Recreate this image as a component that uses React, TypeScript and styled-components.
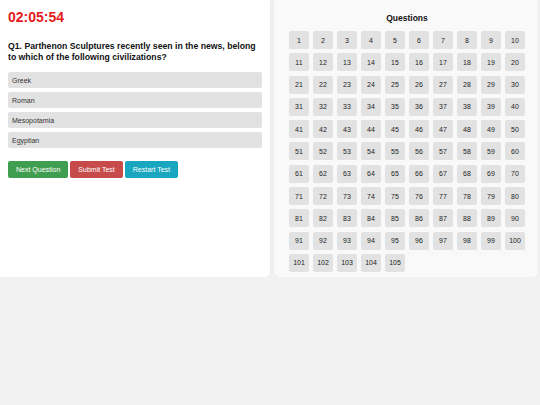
import React from "react";
import styled, { createGlobalStyle } from "styled-components";

const options = ["Greek", "Roman", "Mesopotamia", "Egyptian"];
const questionNumbers = Array.from({ length: 105 }, (_, i) => i + 1);

function App() {
  return (
    <>
      <GlobalStyle />
      <Page>
        <QuizPanel>
          <Timer>02:05:54</Timer>
          <QuestionText>
            Q1. Parthenon Sculptures recently seen in the news, belong to which
            of the following civilizations?
          </QuestionText>
          <OptionList>
            {options.map((opt) => (
              <Option key={opt}>{opt}</Option>
            ))}
          </OptionList>
          <Actions>
            <ActionButton $color="#3f9e4f">Next Question</ActionButton>
            <ActionButton $color="#c84b4c">Submit Test</ActionButton>
            <ActionButton $color="#18a7bf">Restart Test</ActionButton>
          </Actions>
        </QuizPanel>
        <NavPanel>
          <NavTitle>Questions</NavTitle>
          <NumberGrid>
            {questionNumbers.map((n) => (
              <NumberButton key={n}>{n}</NumberButton>
            ))}
          </NumberGrid>
        </NavPanel>
      </Page>
    </>
  );
}

export default App;

const GlobalStyle = createGlobalStyle`
  html, body {
    margin: 0;
    padding: 0;
    background: #f2f2f2;
    font-family: "Liberation Sans", Arial, sans-serif;
  }
`;

const Page = styled.div`
  display: flex;
  gap: 4px;
  align-items: flex-start;
  padding-right: 2px;
  width: 540px;
  box-sizing: border-box;
`;

const QuizPanel = styled.section`
  width: 270px;
  height: 277px;
  box-sizing: border-box;
  padding: 10px 8px;
  background: #ffffff;
  border-radius: 0 0 5px 0;
  box-shadow: 0 0 3px rgba(0, 0, 0, 0.08);
`;

const Timer = styled.div`
  font-size: 14px;
  font-weight: 700;
  color: #e31b1b;
  line-height: 14px;
`;

const QuestionText = styled.p`
  margin: 17px 0 9px;
  font-size: 8.7px;
  line-height: 11px;
  font-weight: 700;
  color: #111;
`;

const OptionList = styled.div`
  display: flex;
  flex-direction: column;
  gap: 4px;
`;

const Option = styled.div`
  height: 16px;
  display: flex;
  align-items: center;
  padding: 0 4px;
  background: #e2e2e2;
  border-radius: 2px;
  font-size: 7px;
  color: #333;
`;

const Actions = styled.div`
  display: flex;
  gap: 2px;
  margin-top: 13px;
`;

const ActionButton = styled.button<{ $color: string }>`
  height: 17px;
  padding: 0 8px;
  border: none;
  border-radius: 2px;
  background: ${(p) => p.$color};
  color: #fff;
  font-family: inherit;
  font-size: 7px;
`;

const NavPanel = styled.section`
  flex: 1;
  height: 277px;
  box-sizing: border-box;
  padding: 13px 13px 0 15px;
  background: #f9f9f9;
  border-radius: 0 0 5px 5px;
  box-shadow: 0 0 3px rgba(0, 0, 0, 0.08);
`;

const NavTitle = styled.h3`
  margin: 0 0 8px;
  text-align: center;
  font-size: 8.5px;
  line-height: 10px;
  font-weight: 700;
  color: #111;
`;

const NumberGrid = styled.div`
  display: grid;
  grid-template-columns: repeat(10, 20px);
  grid-auto-rows: 18px;
  gap: 4.3px 4px;
`;

const NumberButton = styled.button`
  padding: 0;
  border: none;
  border-radius: 2px;
  background: #e2e2e2;
  color: #222;
  font-family: inherit;
  font-size: 7px;
`;
